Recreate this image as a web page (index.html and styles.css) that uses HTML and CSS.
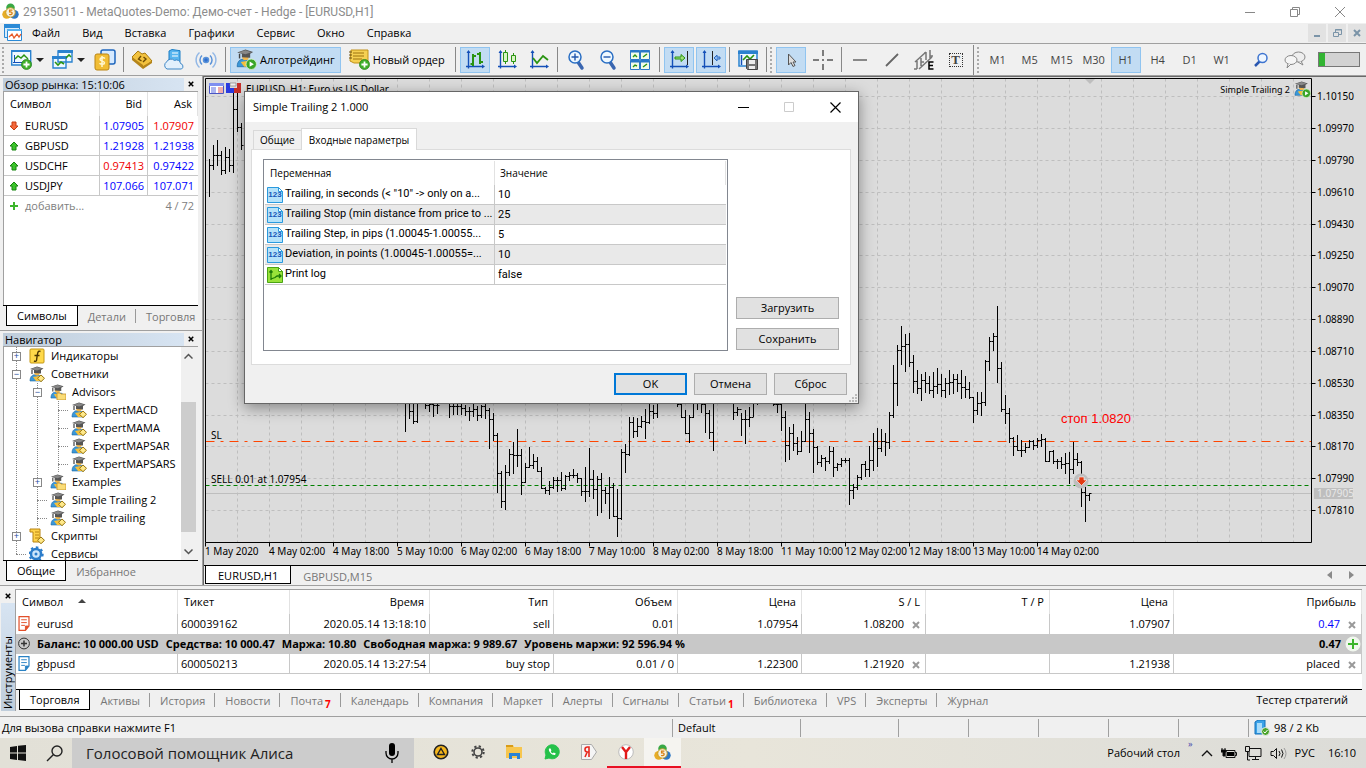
FILE: index.html
```html
<!DOCTYPE html>
<html lang="ru">
<head>
<meta charset="utf-8">
<title>29135011 - MetaQuotes-Demo</title>
<link rel="stylesheet" href="styles.css">
</head>
<body>
<svg class="defs" width="0" height="0" aria-hidden="true">
  <symbol id="expert" viewBox="0 0 16 16">
    <path d="M1 15C1 10 4 8 7 9l6 1v5z" fill="#3b97d8" stroke="#1b68a6" stroke-width=".6"/>
    <path d="M4 11l3 4h5l-2-5z" fill="#f5c03a"/>
    <ellipse cx="8" cy="6.500" rx="2.800" ry="3" fill="#f0b64c"/>
    <path d="M1 3L8 0.500 14.500 2.500 12 4v3.500L5 7V4z" fill="#555"/>
    <path d="M2 3l6-2 5 1.700L8 4.500z" fill="#888"/>
    <path d="M3 4v4" stroke="#444" stroke-width="1.200"/>
  </symbol>
  <symbol id="expert-item" viewBox="0 0 16 16">
    <use href="#expert" width="16" height="16"/>
    <path d="M12 9l3.500 3.300L12 15.700 8.500 12.300z" fill="#ffe98a" stroke="#9b7710"/>
  </symbol>
  <symbol id="expert-folder" viewBox="0 0 16 16">
    <use href="#expert" width="15" height="15"/>
    <path d="M7 9h3l1 1h5v6H7z" fill="#fadd78" stroke="#c3912a" stroke-width=".8"/>
  </symbol>
  <symbol id="expert-play" viewBox="0 0 20 20">
    <use href="#expert" width="18" height="18"/>
    <circle cx="14.500" cy="14.500" r="5" fill="#3aa529" stroke="#d9f2cc" stroke-width=".8"/>
    <path d="M13 12l4 2.500-4 2.500z" fill="#fff"/>
  </symbol>
  <symbol id="plus-badge" viewBox="0 0 10 10">
    <circle cx="5" cy="5" r="4.600" fill="#3fae2a" stroke="#1e7a12" stroke-width=".6"/>
    <path d="M5 2.200v5.600M2.200 5h5.600" stroke="#fff" stroke-width="1.600"/>
  </symbol>
  <symbol id="axes" viewBox="0 0 20 20">
    <path d="M3.500 1v17.500M1 16.500h17" stroke="#1450b8" stroke-width="1.400" fill="none"/>
    <path d="M3.500 0L1.500 3h4zM20 16.500l-3-2v4z" fill="#1450b8"/>
  </symbol>
  <symbol id="metatrader" viewBox="0 0 18 18">
    <circle cx="9" cy="5" r="4.500" fill="#39a845"/>
    <circle cx="5" cy="12" r="4.700" fill="#e7ad27"/>
    <circle cx="13" cy="12" r="4.700" fill="#2d77c4"/>
    <circle cx="9" cy="10" r="5" fill="#f5f1df" stroke="#c99a20"/>
    <path d="M11 7.500H8v2c4-.6 3.500 3.500-.5 2.700" fill="none" stroke="#d98012" stroke-width="1.300"/>
  </symbol>
  <symbol id="arrow-up" viewBox="0 0 10 10"><path d="M5 1l4 4H7v4H3V5H1z" fill="#3cc42b" stroke="#17850e"/></symbol>
  <symbol id="arrow-down" viewBox="0 0 10 10"><path d="M5 9l4-4H7V1H3v4H1z" fill="#f4683a" stroke="#c53d12"/></symbol>
  <symbol id="cross" viewBox="0 0 8 8"><path d="M1 1l6 6M7 1L1 7" stroke="currentColor" stroke-width="2" fill="none"/></symbol>
  <symbol id="num" viewBox="0 0 16 16">
    <path d="M.5.500h11l4 4v11H.5z" fill="#b4e2fa" stroke="#2a9ade"/>
    <path d="M11.500.500v4h4z" fill="#fff" stroke="#2a9ade"/>
  </symbol>
  <symbol id="flag" viewBox="0 0 16 16">
    <path d="M.5.500h11l4 4v11H.5z" fill="#98e23a" stroke="#4aa414"/>
    <path d="M11.500.500v4h4z" fill="#fff" stroke="#4aa414"/>
    <path d="M4 4v9M2.500 5.500L4 3.500l1.500 2M4 12l4-1.500 2-1.500h4M12 7l2 2-2 2" stroke="#1c7a08" stroke-width="1.300" fill="none"/>
  </symbol>
  <symbol id="note" viewBox="0 0 12 16">
    <path d="M.7.700h10.600v10L7.500 15.300H.700z" fill="#fff" stroke="currentColor" stroke-width="1.300"/>
    <path d="M3 4h6M3 7h6M3 10h4M7.500 15v-4.300H11z" stroke="currentColor" fill="currentColor"/>
  </symbol>
</svg>

<header class="titlebar">
  <svg class="app-icon" viewBox="0 0 18 18"><use href="#metatrader"/></svg>
  <h1>29135011 - MetaQuotes-Demo: Демо-счет - Hedge - [EURUSD,H1]</h1>
  <div class="window-buttons">
    <button aria-label="Свернуть"><svg width="12" height="12"><path d="M1 6.500h10" stroke="#888"/></svg></button>
    <button aria-label="Восстановить"><svg width="12" height="12" fill="none" stroke="#888"><path d="M1.500 3.500h7v7h-7zM3.500 3V1.500h7v7H9"/></svg></button>
    <button aria-label="Закрыть"><svg width="12" height="12"><path d="M1 1l10 10M11 1L1 11" stroke="#888"/></svg></button>
  </div>
</header>

<nav class="menubar">
  <svg class="menu-icon" width="18" height="18" viewBox="0 0 18 18"><path d="M.5.500h15v13H.5z" fill="#d9ecfb" stroke="#2b8ad6"/><path d="M0 0h16v4H0z" fill="#2b8ad6"/><path d="M3.500 5.500h14v11h-14z" fill="#fff" stroke="#2b8ad6"/><path d="M3 5h15v2H3z" fill="#58b1ee"/><path d="M5 13l3-3 2 4 3-4 2 3 2-3" fill="none" stroke="#e65a28" stroke-width="1.300"/></svg>
  <button>Файл</button><button>Вид</button><button>Вставка</button><button>Графики</button><button>Сервис</button><button>Окно</button><button>Справка</button>
  <div class="mdi-buttons">
    <button aria-label="Свернуть график"><svg width="10" height="10"><path d="M2 8h6" stroke="#7b94a8" stroke-width="2"/></svg></button>
    <button aria-label="Восстановить график"><svg width="10" height="10" fill="none" stroke="#7b94a8"><path d="M1.500 4.500h5v4h-5zM3.500 4V1.500h6v5H7M3 2h7"/></svg></button>
    <button aria-label="Закрыть график"><svg width="8" height="8"><use href="#cross"/></svg></button>
  </div>
</nav>

<div class="toolbar">
  <i class="grip"></i>
  <button class="tool drop" aria-label="Новый график"><svg width="22" height="22" viewBox="0 0 22 22"><path d="M.7 2h19v14H.7z" fill="#eef8ff" stroke="#2a82cf" stroke-width="1.400"/><path d="M0 1h20v2H0z" fill="#2a82cf"/><path d="M3.500 14V6M2 13.500h15" stroke="#1450b8"/><path d="M4 10l3-3 3 2 3-3 4 4" fill="none" stroke="#2a9412" stroke-width="1.400"/><use href="#plus-badge" x="10" y="10" width="11" height="11"/></svg><i class="caret"></i></button>
  <button class="tool drop" aria-label="Профили"><svg width="22" height="22" viewBox="0 0 22 22"><path d="M6 2h14v11H6zM1 8h13v11H1z" fill="#eef8ff" stroke="#2a82cf" stroke-width="1.400"/><path d="M6 1h15v3H6zM0 7h15v3H0z" fill="#2a82cf"/><path d="M14 9l3-3 2 2M3 13l3 3 3-3 3 2" stroke="#2a9412" stroke-width="1.600" fill="none"/></svg><i class="caret"></i></button>
  <button class="tool" aria-label="Обзор рынка"><svg width="22" height="22" viewBox="0 0 22 22"><rect x="7" y="1" width="14" height="14" rx="2" fill="#d6eaff" stroke="#1e66bd" stroke-width="1.500"/><rect x="1" y="5" width="14" height="16" rx="2" fill="#f1bd35" stroke="#bb8514"/><path d="M11 9.500c-2-1.500-5-1-5 1s4.500 1.200 4.500 3.200-3.500 2-5 .6M8 7v11" fill="none" stroke="#fff7d2" stroke-width="1.500"/></svg></button>
  <i class="sep"></i>
  <button class="tool" aria-label="MetaEditor"><svg width="22" height="22" viewBox="0 0 22 22"><path d="M1 8L7 2l4 3 3-1 7 8-9 7z" fill="#f2c23f" stroke="#a97b12"/><path d="M1 8l11 8v4L1 11zM12 17l9-5v2l-9 6z" fill="#b5851b"/><path d="M10 7L7.500 10l3 2M12 13l3-3-2.500-2" fill="none" stroke="#6b4b05" stroke-width="1.400"/></svg></button>
  <button class="tool" aria-label="VPS"><svg width="22" height="22" viewBox="0 0 22 22"><path d="M6 2l3-1.500 8 1.200v11H6z" fill="#58b5ef" stroke="#1c7fc6"/><path d="M9 4h6M9 7h6" stroke="#fff"/><path d="M4 20a4 4 0 01-.5-7 5 5 0 018-1.500 4 4 0 016 3 3 3 0 011 5.500z" fill="#e2f0fc" stroke="#3d86c6"/></svg></button>
  <button class="tool" aria-label="Сигналы"><svg width="22" height="22" viewBox="0 0 22 22" fill="none" stroke="#5b93d8" stroke-width="1.500"><circle cx="11" cy="11" r="2.500" fill="#2f6fd0"/><path d="M7 15.500a6 6 0 010-9M15 6.500a6 6 0 010 9"/><path d="M4.500 18.500a10 10 0 010-15M17.500 3.500a10 10 0 010 15" stroke="#93b8e6"/></svg></button>
  <i class="sep wide"></i>
  <button class="tool text active"><svg width="21" height="21"><use href="#expert-play"/></svg>Алготрейдинг</button>
  <button class="tool text"><svg width="21" height="21" viewBox="0 0 21 21"><path d="M2 1h17v13H5L1 12z" fill="#f5d052" stroke="#c0911a"/><path d="M4 4h11M4 7h11M4 10h9" stroke="#9b720e"/><path d="M0 3h3M0 6h3M0 9h3" stroke="#6b5010"/><use href="#plus-badge" x="10" y="10" width="11" height="11"/></svg>Новый ордер</button>
  <i class="sep wide"></i>
  <button class="tool active" aria-label="Бары"><svg width="20" height="20"><use href="#axes"/><path d="M8 4v12M5.500 14H8M8 6h3M15 2v12M15 4h-3M15 12h3" stroke="#2a9412" stroke-width="2"/></svg></button>
  <button class="tool" aria-label="Свечи"><svg width="20" height="20"><use href="#axes"/><path d="M8.500 0v14M16.500 3v11" stroke="#2a9412"/><path d="M6.500 2.500h4v9h-4zM14.500 5.500h4v6h-4z" fill="#d9f5c4" stroke="#2a9412"/></svg></button>
  <button class="tool" aria-label="Линия"><svg width="20" height="20"><use href="#axes"/><path d="M4 8l4 5 6-7 5 4" fill="none" stroke="#2a9412" stroke-width="1.800"/></svg></button>
  <i class="sep"></i>
  <button class="tool" aria-label="Увеличить"><svg width="18" height="22" viewBox="0 0 18 22"><path d="M11 13l4 6" stroke="#3a66b0" stroke-width="3.500" stroke-linecap="round"/><circle cx="8" cy="8" r="6" fill="#eef8ff" stroke="#2a6fc4" stroke-width="1.500"/><path d="M8 4.500v7M4.500 8h7" stroke="#2157ad" stroke-width="1.400"/></svg></button>
  <button class="tool" aria-label="Уменьшить"><svg width="18" height="22" viewBox="0 0 18 22"><path d="M11 13l4 6" stroke="#3a66b0" stroke-width="3.500" stroke-linecap="round"/><circle cx="8" cy="8" r="6" fill="#eef8ff" stroke="#2a6fc4" stroke-width="1.500"/><path d="M4.500 8h7" stroke="#2157ad" stroke-width="1.400"/></svg></button>
  <button class="tool" aria-label="Плитка"><svg width="20" height="20"><path d="M.5.500h9v9h-9zM10.500.500h9v9h-9zM.5 10.500h9v9h-9zM10.500 10.500h9v9h-9z" fill="#f3fbe8" stroke="#2a78c8"/><path d="M0 1.500h20M0 11.500h20" stroke="#2a78c8" stroke-width="2"/><path d="M3 7l2-2 2 2M13 7l4-3M3 17l2-2 2 1M13 17l4-3" fill="none" stroke="#2a9412" stroke-width="1.400"/></svg></button>
  <i class="sep wide"></i>
  <button class="tool active" aria-label="Автопрокрутка"><svg width="20" height="20"><use href="#axes"/><path d="M18.500 1v14" stroke="#222"/><path d="M6 7h6V4.500L16 8l-4 3.500V9H6z" fill="#9fe07a" stroke="#2a9412"/></svg></button>
  <button class="tool active" aria-label="Сдвиг графика"><svg width="20" height="20"><use href="#axes"/><path d="M11.500 1v14" stroke="#222"/><path d="M19 7h-3V5l-3 3 3 3V9h3z" fill="#8ab9f1" stroke="#2a68c0"/></svg></button>
  <i class="sep"></i>
  <button class="tool" aria-label="Шаблоны"><svg width="20" height="20"><path d="M1 1h18v15H1z" fill="#eef8ff" stroke="#2a82cf" stroke-width="1.500"/><path d="M0 1h20v3H0z" fill="#2a82cf"/><path d="M3.500 5v10" stroke="#1450b8" stroke-width="1.500"/><path d="M5 10l4-4 3 3 4-4" fill="none" stroke="#2a9412" stroke-width="1.600"/><path d="M8.500 9.500h11v10h-10l-1-1z" fill="#777" stroke="#444"/><path d="M11 10h6v4h-6zM11 16h6v3h-6z" fill="#eee"/></svg></button>
  <i class="sep"></i><i class="grip"></i>
  <button class="tool active" aria-label="Курсор"><svg width="20" height="20"><path d="M7.500 4v11l2.500-2.500 2 4 2-1-2-3.500h3z" fill="#ddd" stroke="#555"/></svg></button>
  <button class="tool" aria-label="Перекрестие"><svg width="20" height="20"><path d="M10 0v6M10 14v6M0 10h6M14 10h6M9 10h2" stroke="#555" stroke-width="1.500"/></svg></button>
  <i class="sep"></i>
  <button class="tool" aria-label="Горизонтальная линия"><svg width="20" height="20"><path d="M3 10h14" stroke="#666" stroke-width="1.500"/></svg></button>
  <button class="tool" aria-label="Трендовая линия"><svg width="20" height="20"><path d="M4 16L16 4" stroke="#666" stroke-width="1.800"/></svg></button>
  <button class="tool" aria-label="Канал"><svg width="22" height="22" viewBox="0 0 22 22"><path d="M2 13L13 3M6 20L19 8M4 12v8M1 20h3M8 9v8M8 13h3M13 3v8M17 1v9M11 4h2M17 7h3" fill="none" stroke="#777" stroke-width="1.500"/><path d="M20.500 13H16v7h4.500M16 16.500h4" fill="none" stroke="#000" stroke-width="1.500"/></svg></button>
  <button class="tool textmark" aria-label="Текст"><span>T</span></button>
  <i class="sep tall"></i><i class="grip"></i>
  <button class="tool tf">M1</button><button class="tool tf">M5</button><button class="tool tf">M15</button><button class="tool tf">M30</button><button class="tool tf active">H1</button><button class="tool tf">H4</button><button class="tool tf">D1</button><button class="tool tf">W1</button>
  <div class="toolbar-end">
    <button class="tool" aria-label="Поиск"><svg width="16" height="16"><path d="M2 14l5-5" stroke="#2a57b0" stroke-width="2.500"/><circle cx="9.500" cy="6" r="4.500" fill="#eef6ff" stroke="#3d74d0" stroke-width="1.500"/></svg></button>
    <button class="tool" aria-label="Чат"><svg width="22" height="18"><ellipse cx="14.500" cy="6" rx="6.500" ry="5" fill="#eee" stroke="#888"/><path d="M17 10l2 4-5-3" fill="#eee" stroke="#888"/><ellipse cx="7" cy="9" rx="6" ry="4.500" fill="#f5f5f5" stroke="#888"/><path d="M4 13l-1 4 4-4" fill="#f5f5f5" stroke="#888"/></svg></button>
    <div class="meter"><i></i></div>
  </div>
</div>

<main class="workspace">
  <aside class="side">
    <section class="panel market">
      <header><h2>Обзор рынка: 15:10:06</h2><button aria-label="Закрыть обзор рынка"><svg width="6" height="6"><use href="#cross"/></svg></button></header>
      <div class="panel-body">
        <table class="quotes">
          <thead><tr><th>Символ</th><th>Bid</th><th>Ask</th></tr></thead>
          <tbody>
            <tr><td><svg><use href="#arrow-down"/></svg>EURUSD</td><td class="up">1.07905</td><td class="down">1.07907</td></tr>
            <tr><td><svg><use href="#arrow-up"/></svg>GBPUSD</td><td class="up">1.21928</td><td class="up">1.21938</td></tr>
            <tr><td><svg><use href="#arrow-up"/></svg>USDCHF</td><td class="down">0.97413</td><td class="up">0.97422</td></tr>
            <tr><td><svg><use href="#arrow-up"/></svg>USDJPY</td><td class="up">107.066</td><td class="up">107.071</td></tr>
            <tr class="add"><td colspan="2"><svg viewBox="0 0 10 10"><path d="M5 1v8M1 5h8" stroke="#3cb52b" stroke-width="2"/></svg>добавить...</td><td>4 / 72</td></tr>
          </tbody>
        </table>
      </div>
      <nav class="tabs"><button class="on">Символы</button><button>Детали</button><button>Торговля</button></nav>
    </section>
    <section class="panel navigator">
      <header><h2>Навигатор</h2><button aria-label="Закрыть навигатор"><svg width="6" height="6"><use href="#cross"/></svg></button></header>
      <div class="panel-body tree-box">
        <ul class="tree">
          <li class="d0"><i class="box">+</i><svg viewBox="0 0 16 16"><rect x="1" y="1" width="14" height="14" rx="1" fill="#ffd94a" stroke="#c49713"/><path d="M11.500 3.500c-3-1.500-3 2-4 9-.5 1-1.500 1-2.500.5M5.500 7.500h5" fill="none" stroke="#4a3500" stroke-width="1.400"/></svg>Индикаторы</li>
          <li class="d0"><i class="box">−</i><svg><use href="#expert-item"/></svg>Советники</li>
          <li class="d1"><i class="box">−</i><svg><use href="#expert-folder"/></svg>Advisors</li>
          <li class="d2"><i class="dots"></i><svg><use href="#expert-item"/></svg>ExpertMACD</li>
          <li class="d2"><i class="dots"></i><svg><use href="#expert-item"/></svg>ExpertMAMA</li>
          <li class="d2"><i class="dots"></i><svg><use href="#expert-item"/></svg>ExpertMAPSAR</li>
          <li class="d2"><i class="dots"></i><svg><use href="#expert-item"/></svg>ExpertMAPSARS</li>
          <li class="d1"><i class="box">+</i><svg><use href="#expert-folder"/></svg>Examples</li>
          <li class="d1"><i class="dots"></i><svg><use href="#expert-item"/></svg>Simple Trailing 2</li>
          <li class="d1"><i class="dots"></i><svg><use href="#expert-item"/></svg>Simple trailing</li>
          <li class="d0"><i class="box">+</i><svg viewBox="0 0 16 16"><path d="M1 1h10v10h3v3H4V4H1z" fill="#ffd34a" stroke="#b88312"/><path d="M6 4h4M6 7h4M6 10h4" stroke="#b88312"/><path d="M12 9l3.500 3.300L12 15.700 8.500 12.300z" fill="#ffe98a" stroke="#9b7710"/></svg>Скрипты</li>
          <li class="d0"><i class="dots"></i><svg viewBox="0 0 16 16"><circle cx="7" cy="8" r="5" fill="#cfe6fb" stroke="#2c7dcb" stroke-width="2.500"/><circle cx="7" cy="8" r="6.700" fill="none" stroke="#2c7dcb" stroke-width="2" stroke-dasharray="2.500 2.700"/><circle cx="7" cy="8" r="1.500" fill="#2c7dcb"/></svg>Сервисы</li>
        </ul>
        <div class="scroll"><svg width="9" height="6"><path d="M.5 5.500l4-4 4 4" fill="none" stroke="#555" stroke-width="1.500"/></svg><i></i><svg width="9" height="6"><path d="M.5.500l4 4 4-4" fill="none" stroke="#555" stroke-width="1.500"/></svg></div>
      </div>
      <nav class="tabs"><button class="on">Общие</button><button>Избранное</button></nav>
    </section>
  </aside>

  <section class="chart-area">
    <svg class="chart" id="chart" role="img" aria-label="EURUSD, H1"></svg>
    <nav class="tabs chart-tabs"><button class="on">EURUSD,H1</button><button>GBPUSD,M15</button>
      <div class="tab-scroll"><svg width="5" height="8"><path d="M5 0v8L0 4z" fill="#8a8a8a"/></svg><svg width="5" height="8"><path d="M0 0v8l5-4z" fill="#8a8a8a"/></svg></div>
    </nav>

    <div class="dialog" role="dialog" aria-label="Simple Trailing 2 1.000">
      <header><h2>Simple Trailing 2 1.000</h2>
        <button aria-label="Свернуть окно"><svg width="11" height="11"><path d="M0 5.500h11" stroke="#000"/></svg></button>
        <button aria-label="Развернуть окно" disabled><svg width="11" height="11"><path d="M.5.500h9v9h-9z" fill="none" stroke="#ccc"/></svg></button>
        <button aria-label="Закрыть окно"><svg width="11" height="11"><path d="M.5.500l10 10M10.500.500l-10 10" stroke="#000" stroke-width="1.200"/></svg></button>
      </header>
      <nav class="dialog-tabs"><button>Общие</button><button class="on">Входные параметры</button></nav>
      <div class="sheet">
        <div class="params-box">
          <table class="params">
            <thead><tr><th>Переменная</th><th>Значение</th></tr></thead>
            <tbody>
              <tr><td><span class="ico"><svg><use href="#num"/></svg><b>123</b></span>Trailing, in seconds (&lt; "10" -&gt; only on a...</td><td>10</td></tr>
              <tr><td><span class="ico"><svg><use href="#num"/></svg><b>123</b></span>Trailing Stop (min distance from price to ...</td><td>25</td></tr>
              <tr><td><span class="ico"><svg><use href="#num"/></svg><b>123</b></span>Trailing Step, in pips (1.00045-1.00055...</td><td>5</td></tr>
              <tr><td><span class="ico"><svg><use href="#num"/></svg><b>123</b></span>Deviation, in points (1.00045-1.00055=...</td><td>10</td></tr>
              <tr><td><span class="ico"><svg><use href="#flag"/></svg></span>Print log</td><td>false</td></tr>
            </tbody>
          </table>
        </div>
        <div class="sheet-buttons"><button class="push">Загрузить</button><button class="push">Сохранить</button></div>
      </div>
      <footer><button class="push default">OK</button><button class="push">Отмена</button><button class="push">Сброс</button></footer>
      <svg class="resize" width="9" height="9"><path d="M6 0h2v2H6zM3 3h2v2H3zM6 3h2v2H6zM0 6h2v2H0zM3 6h2v2H3zM6 6h2v2H6z" fill="#bbb"/></svg>
    </div>
  </section>
</main>

<section class="toolbox">
  <div class="toolbox-side"><button aria-label="Закрыть инструменты"><svg width="6" height="6"><use href="#cross"/></svg></button><div><h2>Инструменты</h2></div></div>
  <div class="toolbox-main">
    <table class="trades">
      <colgroup><col class="c-sym"><col class="c-ticket"><col class="c-time"><col class="c"><col class="c"><col class="c"><col class="c"><col class="c"><col class="c"><col></colgroup>
      <thead><tr><th>Символ <i class="sort"></i></th><th>Тикет</th><th>Время</th><th>Тип</th><th>Объем</th><th>Цена</th><th>S / L</th><th>T / P</th><th>Цена</th><th>Прибыль</th></tr></thead>
      <tbody>
        <tr><td><svg class="note sell"><use href="#note"/></svg>eurusd</td><td>600039162</td><td>2020.05.14 13:18:10</td><td>sell</td><td>0.01</td><td>1.07954</td><td class="x">1.08200<svg><use href="#cross"/></svg></td><td></td><td>1.07907</td><td class="x up">0.47<svg><use href="#cross"/></svg></td></tr>
        <tr class="balance"><td colspan="9"><svg class="note" viewBox="0 0 12 12"><circle cx="6" cy="6" r="5.400" fill="none" stroke="#333"/><path d="M6 3v6M3 6h6" stroke="#333" stroke-width="1.500"/></svg><span>Баланс: 10 000.00 USD</span><span>Средства: 10 000.47</span><span>Маржа: 10.80</span><span>Свободная маржа: 9 989.67</span><span>Уровень маржи: 92 596.94 %</span></td><td class="x">0.47<svg viewBox="0 0 16 16"><circle cx="8" cy="8" r="7.500" fill="#f1f7ee"/><path d="M8 3v10M3 8h10" stroke="#3cb52b" stroke-width="2"/></svg></td></tr>
        <tr><td><svg class="note buy"><use href="#note"/></svg>gbpusd</td><td>600050213</td><td>2020.05.14 13:27:54</td><td>buy stop</td><td>0.01 / 0</td><td>1.22300</td><td class="x">1.21920<svg><use href="#cross"/></svg></td><td></td><td>1.21938</td><td class="x">placed<svg><use href="#cross"/></svg></td></tr>
      </tbody>
    </table>
    <nav class="tabs toolbox-tabs"><button class="on">Торговля</button><button>Активы</button><button>История</button><button>Новости</button><button>Почта<sub>7</sub></button><button>Календарь</button><button>Компания</button><button>Маркет</button><button>Алерты</button><button>Сигналы</button><button>Статьи<sub>1</sub></button><button>Библиотека</button><button>VPS</button><button>Эксперты</button><button>Журнал</button><a href="#tester">Тестер стратегий</a></nav>
  </div>
</section>

<footer class="status">
  <span class="s-help">Для вызова справки нажмите F1</span><span class="s-profile">Default</span><span class="s-wide"></span><span></span><span></span><span></span><span></span><span></span>
  <span class="s-net"><svg width="16" height="16"><path d="M1 2l3-2h7v12l-2 2H1z" fill="#3ba2e8" stroke="#1470b8"/><path d="M3 3h5v10H3z" fill="#a9dcfa"/><circle cx="11.500" cy="11.500" r="4" fill="#4ca52c" stroke="#eee"/><path d="M9.500 11.500l1.500 1.500 2.500-3" fill="none" stroke="#fff"/></svg>98 / 2 Kb</span>
</footer>

<div class="taskbar">
  <button class="task" aria-label="Пуск"><svg width="16" height="16"><path d="M0 2l7-1v6.500H0zM8 .800L16 0v7.500H8zM0 8.500h7V15l-7-1zM8 8.500h8V16l-8-.9z" fill="#111"/></svg></button>
  <button class="task" aria-label="Поиск"><svg width="17" height="17" fill="none" stroke="#222" stroke-width="1.400"><circle cx="11" cy="6" r="5"/><path d="M7.500 9.500L1 16"/></svg></button>
  <div class="alice"><input aria-label="Голосовой помощник Алиса" value="Голосовой помощник Алиса"><svg width="14" height="20"><rect x="4" y="0" width="6" height="13" rx="3"/><path d="M1 8v2a6 6 0 0012 0V8M7 16v4" fill="none" stroke="#000" stroke-width="1.300"/></svg></div>
  <button class="task app" aria-label="Авто"><svg width="16" height="16"><circle cx="8" cy="8" r="6.800" fill="#f5b61c" stroke="#222" stroke-width="1.600"/><path d="M8 4.500l3.500 6h-7z" fill="none" stroke="#222" stroke-width="1.400"/></svg></button>
  <button class="task app" aria-label="Настройки"><svg width="14" height="14"><circle cx="7" cy="7" r="4" fill="none" stroke="#444" stroke-width="1.600"/><circle cx="7" cy="7" r="5.700" fill="none" stroke="#444" stroke-width="2" stroke-dasharray="2.200 2.277"/></svg></button>
  <button class="task app" aria-label="Проводник"><svg width="17" height="16"><path d="M0 1h7l1 2h8v11H0z" fill="#f7c64e"/><path d="M0 1h7v2H0z" fill="#d99c18"/><path d="M3 15V9h11v6h-3v-3H6v3z" fill="#2a82d4"/></svg></button>
  <button class="task app" aria-label="WhatsApp"><svg width="16" height="16"><path d="M1 15l1-4a7 7 0 113 3z" fill="#25c14a" stroke="#25c14a"/><path d="M5 4.500c-1 3 3 7 6 6.500l.8-1.500-2-1-1 .8C7.500 8.800 7 8 6.800 7.200l.6-.8-.8-2z" fill="#fff"/></svg></button>
  <button class="task app" aria-label="Яндекс"><svg width="16" height="16"><path d="M.5.500h10l5 7.500-5 7.500H.5z" fill="#f5f5f5" stroke="#aaa"/><path d="M8 13V3H6.500a2.500 2.500 0 000 5H8M6 8.500L4 13" fill="none" stroke="#e8281e" stroke-width="1.600"/></svg></button>
  <button class="task app open" aria-label="Яндекс Браузер"><svg width="16" height="16"><circle cx="8" cy="8" r="7.300" fill="#fff" stroke="#bbb"/><path d="M4 3l4 5 4-5M8 8v7" fill="none" stroke="#e21b1b" stroke-width="2.400"/></svg></button>
  <button class="task app open current" aria-label="MetaTrader"><svg width="17" height="17"><use href="#metatrader"/></svg></button>
  <div class="tray">
    <span>Рабочий стол</span><small>»</small>
    <svg width="12" height="8"><path d="M1 7l5-5 5 5" fill="none" stroke="#111" stroke-width="1.400"/></svg>
    <svg width="16" height="12"><path d="M5 3.500h9v7H5zM14 5.500h1.500v3H14" fill="none" stroke="#111"/><path d="M6 5h7v4H6z"/><path d="M1 1v2M4 1v2M0 3h5v2H4v4H2V5H0z" stroke="#111"/></svg>
    <svg width="17" height="15" fill="none" stroke="#111"><path d="M5 2.500h11v8H4V6M7 13.500h7M10.500 11v3M.5.500h4v5h-4zM2.500 6v8H5"/></svg>
    <svg width="17" height="13" fill="none" stroke="#111"><path d="M1 4.500h2.500l3-3v10l-3-3H1zM9 4q2 2.500 0 5M11.500 2.500q3 4 0 8"/><path d="M14 1q4 5.500 0 11" stroke="#999"/></svg>
    <span>РУС</span><time>16:10</time>
  </div>
</div>
<script src="chart.js"></script>
</body>
</html>
```

FILE: styles.css
```css
* { box-sizing: border-box; }
body {
  margin: 0;
  min-height: 100vh;
  display: flex;
  flex-direction: column;
  overflow: hidden;
  background: #f0f0f0;
  color: #000;
  font: 11px/16px "Open Sans", "Noto Sans", sans-serif;
}
button {
  margin: 0;
  padding: 0;
  border: 0;
  background: none;
  color: inherit;
  font: inherit;
  white-space: nowrap;
}
h1, h2 { margin: 0; font: inherit; white-space: nowrap; }
svg { flex: none; display: block; }
.defs { position: absolute; }

.titlebar {
  display: flex;
  align-items: center;
  height: 23px;
  padding-left: 2px;
  gap: 4px;
  background: #fff;
  color: #8c8c8c;
}
.titlebar h1 { font: 12px/16px Roboto, "Open Sans", sans-serif; }
.app-icon { width: 17px; height: 17px; }
.window-buttons { margin-left: auto; display: flex; padding-right: 4px; }
.window-buttons button { width: 45px; display: grid; place-items: center; }

.menubar { display: flex; align-items: center; height: 21px; padding-left: 4px; border-bottom: 1px solid #a0a0a0; }
.menu-icon { margin-right: -1px; }
.menubar > button { padding: 0 11px; }
.mdi-buttons { margin-left: auto; display: flex; gap: 2px; color: #7b94a8; }
.mdi-buttons button { width: 18px; height: 18px; display: grid; place-items: center; background: #e2e2e2; }

.toolbar { display: flex; align-items: center; gap: 2px; height: 32px; padding-left: 2px; border-bottom: 1px solid #a0a0a0; }
.grip { flex: none; width: 4px; height: 26px; background: radial-gradient(circle at 1px 1px, #aaa 1px, transparent 1px) 0 0 / 4px 4px; }
.sep { flex: none; width: 3px; height: 25px; background: linear-gradient(#888, #888) center / 1px 100% no-repeat; }
.sep.wide { width: 5px; }
.sep.tall { height: 30px; width: 2px; }
.tool { flex: none; width: 30px; height: 26px; display: flex; align-items: center; justify-content: center; border: 1px solid transparent; color: #444; }
.tool.drop { width: 39px; gap: 3px; }
.caret { border: 4px solid transparent; border-top-color: #222; border-bottom: 0; }
.tool.text { width: auto; padding: 0 5px; gap: 3px; color: #000; }
.tool.active { background: #c2dcf3; border-color: #90c4f0; }
.textmark span { width: 14px; height: 14px; border: 1px dotted #333; font: bold 13px/12px "Liberation Serif", serif; }
.toolbar-end { margin-left: auto; display: flex; align-items: center; gap: 4px; padding-right: 6px; }
.meter { width: 42px; height: 15px; margin-left: 4px; border: 1px solid #777; background: #d2d2d2; }
.meter i { display: block; width: 6px; height: 13px; background: #32b432; }

.workspace { flex: 1; min-height: 0; display: flex; border-bottom: 1px solid #a0a0a0; }
.side { flex: none; width: 203px; display: flex; flex-direction: column; border-right: 1px solid #a0a0a0; }
.panel { display: flex; flex-direction: column; min-height: 0; padding: 1px 4px 3px 3px; }
.market { flex: 254; border-bottom: 1px solid #a0a0a0; }
.navigator { flex: 254; }
.panel > header { display: flex; align-items: center; height: 14px; }
.panel h2 { flex: 1; padding-left: 2px; line-height: 13px; background: linear-gradient(90deg, #bfcddb, #d7e4f2); }
.panel > header button { width: 14px; height: 13px; display: grid; place-items: center; }
.panel-body { flex: 1; min-height: 0; overflow: hidden; background: #fff; border: 1px solid #a0a0a0; border-width: 1px 0 0 1px; }
table { border-collapse: separate; border-spacing: 0; table-layout: fixed; width: 100%; }
th { font-weight: 400; }
th, td { padding: 0; white-space: nowrap; overflow: hidden; }
.quotes th { height: 24px; text-align: right; padding-right: 5px; border-right: 1px solid #e2e2e2; }
.quotes th:first-child { width: 96px; text-align: left; padding-left: 6px; }
.quotes th:nth-child(2) { width: 48px; }
.quotes td { height: 20px; text-align: right; padding-right: 3px; border-right: 1px solid #c8c8c8; border-bottom: 1px solid #c8c8c8; }
.quotes td:first-child { text-align: left; padding-left: 5px; }
.quotes td:last-child { border-right: 0; padding-right: 4px; }
.quotes td svg { width: 10px; height: 10px; display: inline-block; margin-right: 6px; vertical-align: -1px; }
.quotes .add td { border: 0; color: #808080; }
.up { color: #00f; }
.down { color: #f00000; }

.tabs { flex: none; display: flex; height: 22px; border-top: 1px solid #000; overflow: hidden; color: #777; }
.tabs button { flex: none; height: 20px; padding: 0 10px; line-height: 19px; background: linear-gradient(#999, #999) right center / 1px 14px no-repeat; }
.tabs button.on { margin: -1px 0 0 3px; height: 21px; background: #fff; color: #000; border: 1px solid #000; border-top-color: #fff; }
.tabs button:last-of-type { background-image: none; }

.tree-box { display: flex; }
.tree { flex: 1; min-width: 0; margin: 0; padding: 0; list-style: none; overflow: hidden; background: repeating-linear-gradient(#888 0 1px, transparent 1px 2px) 12px 0 / 1px 208px no-repeat; }
.tree li { display: flex; align-items: center; height: 18px; white-space: nowrap; font-size: 12px; }
.tree li svg { width: 16px; height: 16px; margin-right: 6px; }
.tree .d0 { padding-left: 8px; font-size: 11px; }
.d1, .d2 { background: repeating-linear-gradient(#888 0 1px, transparent 1px 2px) 33px 0 / 1px 100% no-repeat; }
.tree .d1 { padding-left: 29px; font-size: 11px; }
.tree .d2 { padding-left: 50px; font-size: 11px; background-image: repeating-linear-gradient(#888 0 1px, transparent 1px 2px), repeating-linear-gradient(#888 0 1px, transparent 1px 2px); background-position: 33px 0, 54px 0; }
.box { flex: none; width: 9px; height: 9px; margin-right: 8px; border: 1px solid #888; background: #fff; color: #2a4ea0; font: 9px/7px "Liberation Sans", sans-serif; text-align: center; }
.dots { flex: none; width: 10px; margin: 0 3px 0 4px; border-top: 1px dotted #888; }
.scroll { flex: none; width: 17px; display: flex; flex-direction: column; align-items: center; padding: 6px 2px 5px 0; background: #f0f0f0; }
.scroll i { width: 15px; height: 130px; margin: auto 0 17px; background: #cdcdcd; }

.chart-area { flex: 1; min-width: 0; position: relative; display: flex; flex-direction: column; border-left: 1px solid #696969; }
.chart { flex: 1; min-height: 0; width: 100%; background: #dcdcdc; border-top: 1px solid #696969; }
.chart text { font: 10px "Noto Sans", sans-serif; fill: #000; }
.chart .label-red { font: 13px "Liberation Sans", sans-serif; fill: #f00; }
.chart .label-expert { font-size: 9px; }
.chart .price-now { fill: #e8e8e8; }
.grid-line { stroke: #bebebe; stroke-dasharray: 3 3; }
.frame, .bars { fill: none; stroke: #000; }
.stop-line { stroke: #ff4500; stroke-dasharray: 9 6 3 6; }
.deal-line { stroke: #008000; stroke-dasharray: 4 3; }
.now-line { stroke: #bebebe; }
.chart-tabs { height: 20px; }
.chart-tabs button.on { margin-left: 1px; height: 19px; }
.chart-tabs button { padding: 0 12px; }
.tab-scroll { margin: 5px 12px 0 auto; display: flex; gap: 17px; }

.dialog { position: absolute; left: 40px; top: 15px; width: 615px; border: 1px solid #666; background: #f0f0f0; box-shadow: 0 4px 14px rgba(0, 0, 0, .4); }
.dialog header { display: flex; align-items: center; height: 30px; padding-left: 8px; background: #fff; }
.dialog header h2 { flex: 1; }
.dialog header button { width: 46px; height: 28px; display: grid; place-items: center; }
.dialog-tabs { display: flex; align-items: flex-end; height: 27px; padding-left: 8px; font-size: 10px; }
.dialog-tabs button { height: 19px; padding: 0 6px; border: 1px solid #d9d9d9; border-bottom: 0; }
.dialog-tabs .on { height: 22px; margin: 0 0 -1px -1px; padding: 0 7px; background: #fff; position: relative; }
.sheet { display: flex; gap: 8px; margin: 0 7px 0 6px; padding: 9px 11px 13px; border: 1px solid #dcdcdc; background: #fff; }
.params-box { flex: 1; height: 192px; border: 1px solid #828790; padding: 1px; }
.params th { height: 24px; text-align: left; padding-left: 5px; border-right: 1px solid #e2e2e2; font-size: 10px; }
.params th:first-child { width: 230px; }
.params td { height: 20px; padding-left: 3px; border-bottom: 1px solid #c8c8c8; font: 11px/16px Roboto, "Open Sans", sans-serif; }
.params td:first-child { padding-left: 2px; border-right: 1px solid #c8c8c8; }
.params tr:nth-child(even) td { background: #e9e9e9; }
.ico { display: inline-grid; place-items: center; width: 16px; height: 16px; margin-right: 2px; vertical-align: middle; }
.ico > * { grid-area: 1 / 1; }
.ico svg { width: 16px; height: 16px; }
.ico b { font: bold 8px/8px "Liberation Sans", sans-serif; color: #1556b8; }
.sheet-buttons { display: flex; flex-direction: column; justify-content: flex-end; gap: 9px; width: 103px; padding-bottom: 1px; }
.push { height: 22px; border: 1px solid #adadad; background: #e1e1e1; }
.dialog footer { display: flex; justify-content: flex-end; gap: 7px; padding: 8px 11px 8px; }
.dialog footer .push { width: 73px; }
.push.default { border: 2px solid #0078d7; }
.resize { position: absolute; right: 0; bottom: 0; }

.toolbox { display: flex; height: 131px; padding: 3px 4px 5px 1px; border-bottom: 1px solid #a0a0a0; }
.toolbox-side { width: 14px; display: flex; flex-direction: column; }
.toolbox-side button { height: 14px; display: grid; place-items: center; }
.toolbox-side div { flex: 1; min-height: 0; display: flex; justify-content: flex-start; overflow: hidden; writing-mode: vertical-rl; transform: rotate(180deg); background: linear-gradient(0deg, #d7e4f2, #bfcddb); }
.toolbox-side h2 { padding-top: 2px; line-height: 14px; }
.toolbox-main { flex: 1; min-width: 0; display: flex; flex-direction: column; justify-content: space-between; border: 1px solid #a0a0a0; border-width: 1px 0 0 1px; background: #fff; }
.c-sym { width: 162px; }
.c-ticket { width: 112px; }
.c-time { width: 140px; }
.c { width: 124px; }
.trades th { height: 24px; text-align: right; padding-right: 5px; border-right: 1px solid #e2e2e2; }
.trades th:first-child, .trades th:nth-child(2) { text-align: left; padding-left: 6px; }
.trades td { height: 20px; text-align: right; padding-right: 3px; border-right: 1px solid #c8c8c8; line-height: 16px; }
.trades td:first-child { text-align: left; padding-left: 2px; }
.trades td:nth-child(2) { text-align: left; padding-left: 3px; }
.trades tr:last-child td { border-bottom: 1px solid #c8c8c8; }
.trades .balance td { height: 20px; background: #c8c8c8; font-weight: 700; border: 0; text-align: left; }
.trades .balance td.x { text-align: right; }
.balance span { margin-right: 7px; }
.sort { display: inline-block; margin: 0 0 3px 12px; border: 4px solid transparent; border-bottom-color: #444; border-top: 0; }
.note { display: inline-block; width: 12px; height: 15px; margin-right: 7px; vertical-align: -3px; }
.sell { color: #e2502a; }
.buy { color: #2a82c4; }
.x svg { display: inline-block; width: 8px; height: 8px; margin: 0 2px 0 8px; color: #999; }
.x svg { vertical-align: -1px; }
.balance .x svg { width: 16px; height: 16px; margin: 0 -2px 0 4px; vertical-align: -4px; }
.toolbox-tabs { background: #f0f0f0; }
.tabs sub { font-size: 10px; line-height: 0; font-weight: 700; color: #f00; margin-left: 2px; }
.tabs a { margin-left: auto; padding-right: 14px; color: #000; line-height: 20px; text-decoration: none; }

.status { display: flex; align-items: center; height: 21px; padding: 0 0 0 2px; }
.status span { flex: none; width: 70px; height: 18px; line-height: 18px; padding-left: 5px; border-left: 1px solid #a0a0a0; }
.status .s-help { flex: 1; padding: 0; border: 0; }
.status .s-profile { width: 128px; }
.status .s-wide { width: 98px; }
.status .s-net { width: 118px; display: flex; align-items: center; gap: 4px; }

.taskbar { display: flex; align-items: stretch; height: 30px; background: linear-gradient(90deg, #e2e0d7, #e8e5da 55%, #dcdcd8); }
.task { flex: none; width: 36px; display: grid; place-items: center; }
.alice { flex: none; width: 342px; display: flex; align-items: center; padding: 0 15px 0 14px; background: #ccc; }
.alice input { flex: 1; min-width: 0; padding: 0; border: 0; background: none; font: 15px/20px "Open Sans", "Noto Sans", sans-serif; color: #222; }
.app { width: 37px; border-bottom: 2px solid transparent; }
.alice + .app { margin-left: 8px; }
.open { border-bottom-color: #e81123; }
.current { background: #f5f4f0; }
.tray { margin-left: auto; display: flex; align-items: center; gap: 8px; padding-right: 10px; }
.tray small { align-self: flex-start; line-height: 12px; color: #44a; }
.tray time { margin-left: 5px; }
```

FILE: chart.js
```js
const svg = document.getElementById('chart');
const NS = 'http://www.w3.org/2000/svg';
const plot = document.createElementNS(NS, 'g');
plot.setAttribute('transform', 'translate(-204 -77)');
svg.append(plot);

function add(tag, attrs, text) {
  const el = document.createElementNS(NS, tag);
  for (const name in attrs) el.setAttribute(name, attrs[name]);
  if (text) el.textContent = text;
  plot.append(el);
  return el;
}
function line(cls, x1, y1, x2, y2) {
  add('line', { class: cls, x1: x1 + 0.5, y1: y1 + 0.5, x2: x2 + 0.5, y2: y2 + 0.5 });
}

const LEFT = 205, TOP = 78, RIGHT = 1311, BOTTOM = 542;
const priceY = i => Math.round(96.3 + i * 31.83);

for (let x = 237; x < RIGHT; x += 32) line('grid-line', x, TOP, x, BOTTOM);
for (let i = 0; i < 14; i++) {
  const y = priceY(i);
  line('grid-line', LEFT, y, RIGHT, y);
  line('frame', RIGHT, y, RIGHT + 4, y);
  add('text', { x: 1317, y: y + 4 }, (1.1015 - i * 0.0018).toFixed(5));
}

const times = ['1 May 2020', '4 May 02:00', '4 May 18:00', '5 May 10:00', '6 May 02:00', '6 May 18:00',
  '7 May 10:00', '8 May 02:00', '8 May 18:00', '11 May 10:00', '12 May 02:00', '12 May 18:00',
  '13 May 10:00', '14 May 02:00'];
times.forEach((t, i) => {
  const x = LEFT + i * 64;
  line('frame', x, BOTTOM, x, BOTTOM + 4);
  add('text', { x, y: 555 }, t);
});

line('now-line', LEFT, 493, RIGHT, 493);
line('stop-line', LEFT, 441, RIGHT, 441);
line('deal-line', LEFT, 485, RIGHT, 485);

/* Each run starts at x and steps 4px per bar: high, low, close. */
const runs = [
  [209, [159,197,165, 145,170,155, 140,166,155, 151,175,170, 147,174,157, 149,172,165, 93,173,109, 93,132,127, 123,150,145]],
  [401, [395,404,398, 395,432,400, 400,419,411, 402,424,421, 400,423,403, 395,404,402, 398,409,405, 398,412,404,
    396,417,405, 398,414,405]],
  [449, [398,418,406, 403,415,406, 403,415,406, 404,415,408, 405,416,411, 407,421,411, 404,417,409, 406,421,415,
    405,418,406, 404,419,410, 408,449,419, 413,441,435, 433,493,473, 471,508,501, 465,510,472, 449,476,454,
    442,474,455, 429,467,455, 449,495,482, 463,483,467, 447,468,465, 454,469,461, 457,472,471, 467,489,488,
    487,494,490, 481,495,487, 477,489,480, 477,492,480, 472,491,488, 475,490,476, 472,481,475, 469,478,475,
    473,483,478, 478,496,491, 467,502,491, 448,497,479, 470,499,489, 476,516,479, 473,513,490, 487,504,493,
    477,519,487, 483,517,516, 489,537,518, 449,520,452, 444,473,454, 417,456,422, 417,438,431, 418,437,426,
    416,428,421, 409,439,422, 404,424,411, 405,419,413, 400,418,402]],
  [673, [398,404,400, 398,407,404, 403,418,417, 410,434,433, 415,443,417, 400,418,402, 398,410,402, 400,413,404,
    404,433,413, 410,439,432, 400,451,402]],
  [721, [398,404,400]],
  [733, [398,420,412, 407,416,409, 413,436,419, 410,444,419, 407,427,417, 400,417,402, 398,405,400]],
  [773, [398,406,404, 400,413,404, 403,431,417, 411,462,445, 427,460,433, 424,451,443, 437,455,451, 431,452,441,
    402,442,419, 412,453,433, 429,473,447, 446,465,462, 455,467,458, 457,471,461, 446,464,451, 447,477,467,
    463,471,464, 458,467,460, 458,463,460, 458,505,490, 484,499,487, 475,490,477, 464,480,464, 461,477,469,
    446,477,460, 433,471,441, 428,467,448, 429,452,441, 433,456,442, 412,449,415, 365,418,383, 345,406,350,
    326,365,346, 334,372,344, 333,367,362, 355,393,381, 370,394,388, 374,401,380, 372,393,383, 376,394,390,
    372,398,386, 368,394,384, 374,397,390, 378,398,383, 370,395,382, 374,394,379, 374,392,383, 370,399,387,
    376,398,389, 382,399,397, 397,423,410, 392,415,403, 392,416,402, 360,406,361, 337,371,341, 333,351,336,
    306,383,368, 362,412,409, 395,424,413, 408,443,438, 437,456,446, 435,451,450, 440,457,450, 443,453,447,
    440,448,441, 440,450,445, 438,448,440, 434,447,439, 438,462,461, 451,462,451, 450,464,461, 459,469,461,
    457,469,464, 453,474,463, 452,484,469, 442,474,459, 453,466,462, 461,507,492, 487,522,495, 493,501,493]]
];
let path = '';
for (const [start, v] of runs) {
  let prev = null;
  for (let i = 0; i < v.length; i += 3) {
    const x = start + (i / 3) * 4 + 0.5;
    path += `M${x} ${v[i]}V${v[i + 1]}M${x} ${v[i + 2] + 0.5}h2`;
    if (prev !== null) path += `M${x} ${prev + 0.5}h-2`;
    prev = v[i + 2];
  }
}
add('path', { class: 'bars', d: path });
add('path', { class: 'frame', d: `M${LEFT + 0.5} ${BOTTOM + 0.5}V${TOP + 0.5}H${RIGHT + 0.5}V${BOTTOM + 0.5}Z` });

add('text', { x: 246, y: 93 }, 'EURUSD, H1:  Euro vs US Dollar');
add('text', { x: 211, y: 439 }, 'SL');
add('text', { x: 211, y: 483 }, 'SELL 0.01 at 1.07954');
add('text', { x: 1290, y: 93, 'text-anchor': 'end', class: 'label-expert' }, 'Simple Trailing 2');
add('text', { x: 1061, y: 423, class: 'label-red' }, 'стоп 1.0820');
add('rect', { x: 1314, y: 488, width: 39, height: 11, fill: '#bebebe' });
add('text', { x: 1317, y: 497, class: 'price-now' }, '1.07905');
add('use', { href: '#expert-play', x: 1294, y: 81, width: 17, height: 17 });
add('path', { d: 'M1085 79h10l-5 5z', fill: '#bebebe' });
add('circle', { cx: 1081, cy: 481, r: 7.5, fill: '#bebebe' });
add('path', { d: 'M1079 477h5v3h3l-5.500 5.500-5.500-5.500h3z', fill: '#e23a12', stroke: '#fff', 'stroke-width': 0.6 });
add('path', { d: 'M209.500 83.500h14v10h-14z', fill: '#fff', stroke: '#4a55c4' });
add('path', { d: 'M209 83h15v3h-15z', fill: '#7f8ff0' });
add('path', { d: 'M211 88h5M211 90h5M211 92h5', stroke: '#5a6ae0' });
add('path', { d: 'M218 88h5M218 90h5M218 92h5', stroke: '#e05a5a' });
add('path', { d: 'M226 83h4v5h4v5h-8z', fill: '#2a3be0' });
add('path', { d: 'M241 83h-4v5h-3v5h7z', fill: '#c8302a' });
add('path', { d: 'M230 83h6v3h-6z', fill: '#eee', stroke: '#777', 'stroke-width': 0.6 });
```
